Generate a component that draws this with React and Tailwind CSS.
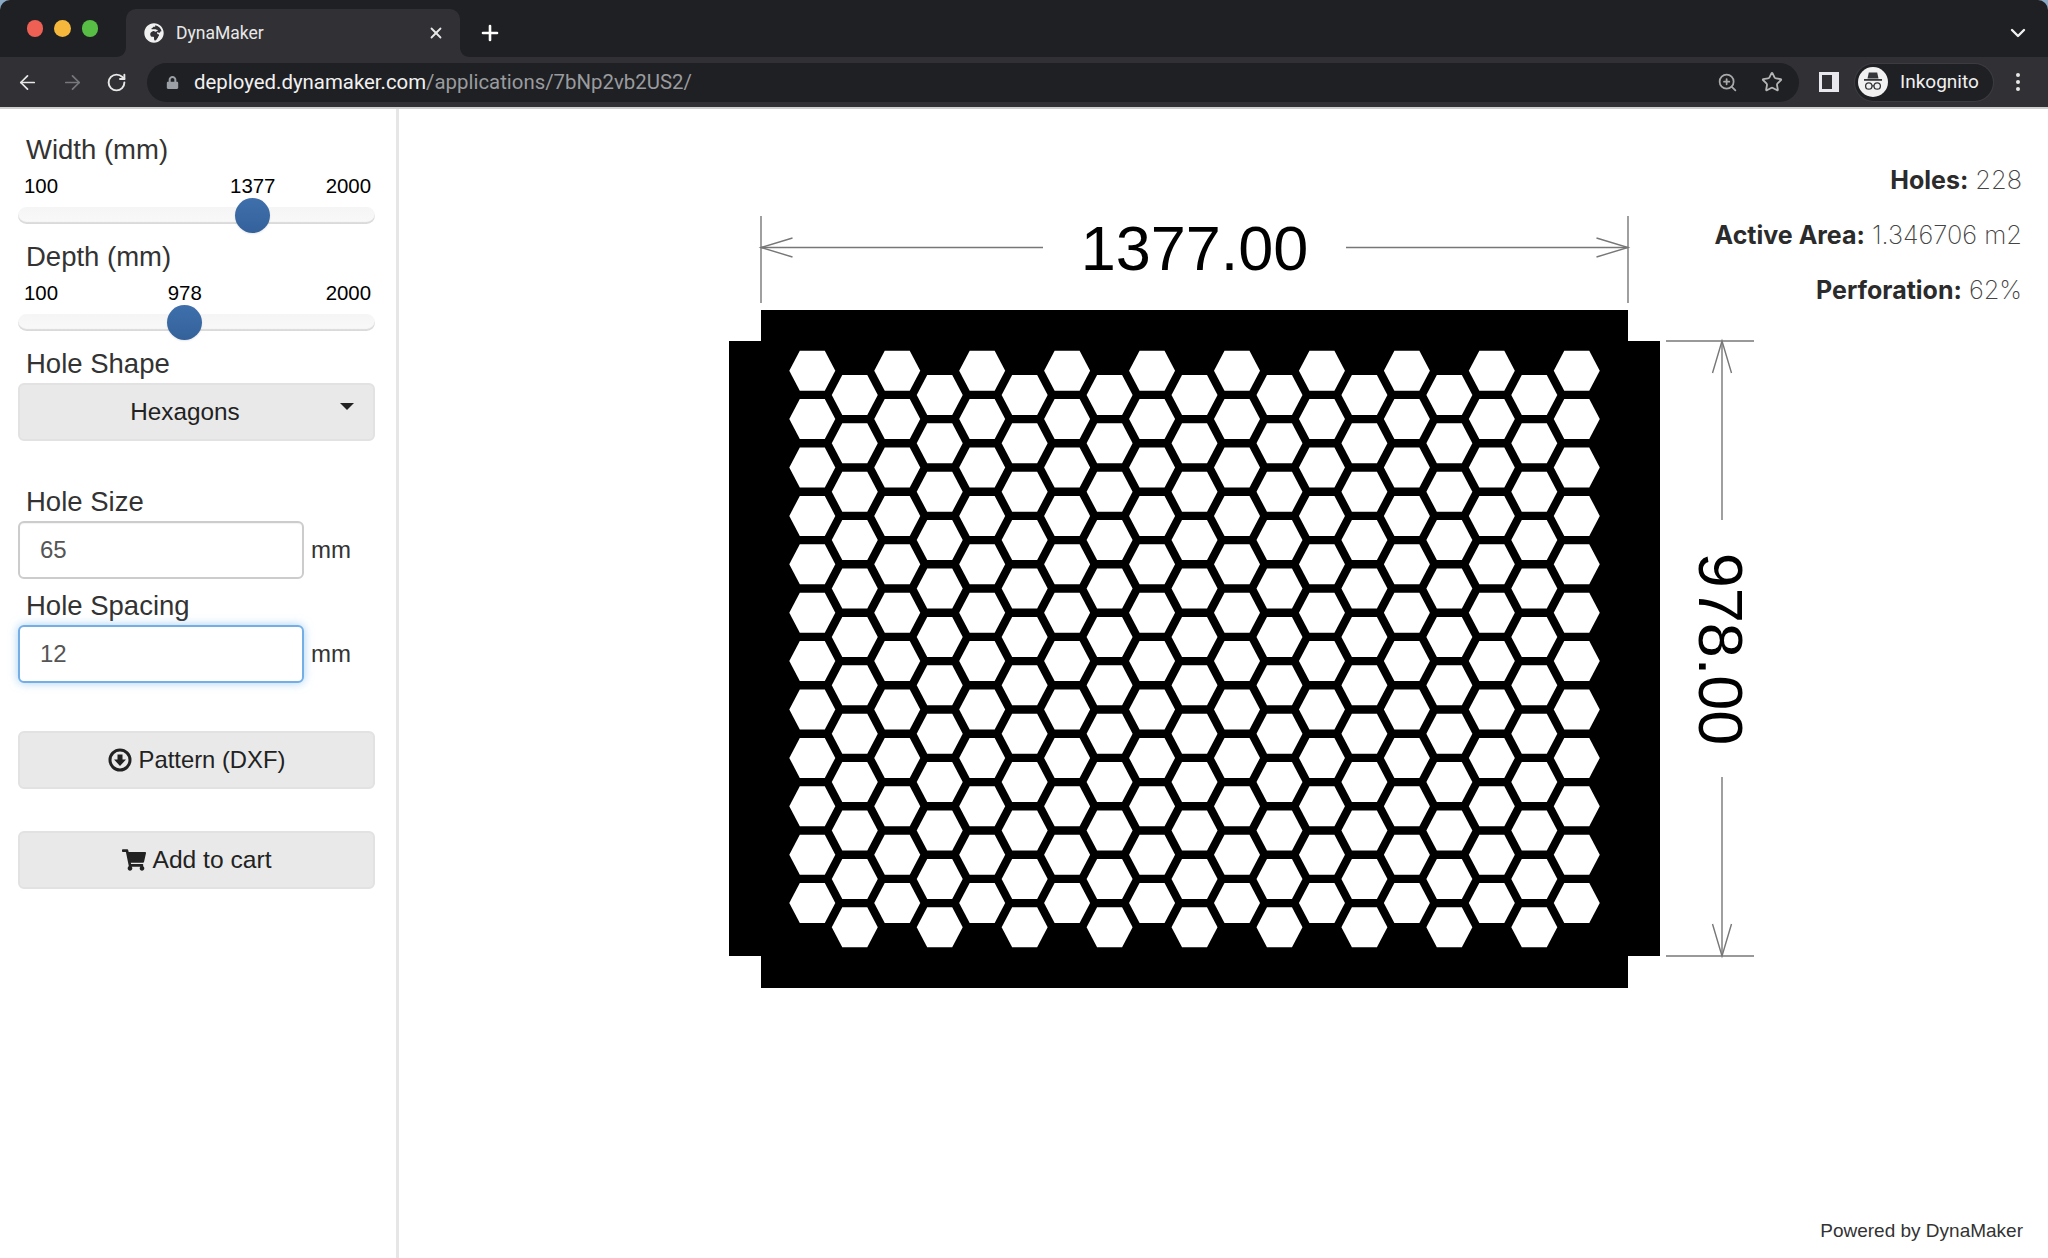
import { ArrowLeft, ArrowRight, ChevronDown, Plus, RotateCw, Star, X, ZoomIn } from "lucide-react";
import { FaGlobeAfrica, FaLock, FaShoppingCart } from "react-icons/fa";

const HEX_COLS = 19;
const HEX_ROWS = 12;

function hexPoints(cx, cy) {
  return [
    [cx - 23, cy],
    [cx - 12.5, cy - 20],
    [cx + 12.5, cy - 20],
    [cx + 23, cy],
    [cx + 12.5, cy + 20],
    [cx - 12.5, cy + 20],
  ]
    .map((p) => p.join(","))
    .join(" ");
}

function Drawing() {
  const hexes = [];
  for (let col = 0; col < HEX_COLS; col++) {
    for (let row = 0; row < HEX_ROWS; row++) {
      const cx = 92.3 + col * 42.47;
      const cy = 170.7 + row * 48.4 + (col % 2 ? 24.2 : 0);
      hexes.push(<polygon key={`${col}-${row}`} points={hexPoints(cx, cy)} fill="#fff" />);
    }
  }

  // svg origin sits at page x=720, y=200
  return (
    <svg width="1040" height="800" viewBox="0 0 1040 800" className="block ml-[321px] mt-[91px] [grid-area:1/1] justify-self-start self-start">
      <polygon points="41,110 908,110 908,141 940,141 940,756 908,756 908,788 41,788 41,756 9,756 9,141 41,141" fill="#000" />
      {hexes}

      <g stroke="#777" strokeWidth="1.4" fill="none">
        <path d="M41 16V103" />
        <path d="M908 16V103" />
        <path d="M41 47.5H323" />
        <path d="M626 47.5H908" />
        <path d="M72.5 38L41 47.5L72.5 57" />
        <path d="M876.5 38L908 47.5L876.5 57" />
        <path d="M946 141H1034" />
        <path d="M946 756H1034" />
        <path d="M1002 141V320" />
        <path d="M1002 577V756" />
        <path d="M992.5 173L1002 141L1011.5 173" />
        <path d="M992.5 724L1002 756L1011.5 724" />
      </g>

      <text x="474.5" y="69.5" textAnchor="middle" fontSize="63" fontFamily="'Liberation Sans', sans-serif" fill="#000">
        1377.00
      </text>
      <text x="0" y="0" transform="translate(979 449) rotate(90)" textAnchor="middle" fontSize="63" fontFamily="'Liberation Sans', sans-serif" fill="#000">
        978.00
      </text>
    </svg>
  );
}

function IncognitoIcon() {
  return (
    <svg width="30" height="30" viewBox="0 0 30 30" className="block">
      <circle cx="15" cy="15" r="15" fill="#f1f1f1" />
      <path d="M9.5 11.5L10.8 5.5H19.2L20.5 11.5Z" fill="#35363a" />
      <rect x="6" y="12" width="18" height="1.8" fill="#35363a" />
      <circle cx="10.8" cy="19" r="3.2" fill="none" stroke="#35363a" strokeWidth="1.3" />
      <circle cx="19.2" cy="19" r="3.2" fill="none" stroke="#35363a" strokeWidth="1.3" />
      <path d="M14 18.8H16" stroke="#35363a" strokeWidth="1.2" />
    </svg>
  );
}

function TabCorner({ flip }) {
  return (
    <svg width="10" height="10" viewBox="0 0 10 10" className={`block self-end ${flip ? "-scale-x-100" : ""}`}>
      <path d="M10 0V10H0C6 10 10 6 10 0Z" fill="#313135" />
    </svg>
  );
}

function BrowserChrome() {
  return (
    <div className="bg-[#8aa9c4]">
      <div className="rounded-t-[10px] bg-[#1f2023] font-['Roboto',sans-serif]">
        <div className="flex h-[57px] items-end">
          <div className="flex w-[116px] gap-[11px] self-start pl-[26.5px] pt-[20px]">
            <span className="h-[16.5px] w-[16.5px] shrink-0 rounded-full bg-[#ee5f54]" />
            <span className="h-[16.5px] w-[16.5px] shrink-0 rounded-full bg-[#f5b83d]" />
            <span className="h-[16.5px] w-[16.5px] shrink-0 rounded-full bg-[#57bd45]" />
          </div>
          <TabCorner />
          <div className="flex h-[48px] w-[334px] items-center rounded-t-[10px] bg-[#313135] pl-[18px] pr-[15px]">
            <FaGlobeAfrica className="text-[20px] text-[#f0f0f0]" />
            <span className="ml-[12px] flex-1 text-[17.5px] text-[#e8e8e8]">DynaMaker</span>
            <X size={18} strokeWidth={2.4} className="text-[#e8e8e8]" />
          </div>
          <TabCorner flip />
          <Plus size={24} strokeWidth={2.6} className="ml-[8px] mb-[12px] text-white" />
          <ChevronDown size={24} strokeWidth={2.4} className="ml-auto mr-[18px] mb-[12px] text-[#f0f0f0]" />
        </div>

        <div className="flex h-[52px] items-center border-b-2 border-[#cfcfcf] bg-[#313135]">
          <div className="flex w-[147px] items-center gap-[22px] pl-[16px]">
            <ArrowLeft size={23} strokeWidth={1.8} className="text-[#e8e8e8]" />
            <ArrowRight size={23} strokeWidth={1.8} className="text-[#77787c]" />
            <RotateCw size={21} strokeWidth={2.2} className="text-[#e8e8e8]" />
          </div>
          <div className="flex h-[39px] w-[1652px] items-center rounded-full bg-[#1f2023] pl-[19px] pr-[16px]">
            <FaLock className="text-[13px] text-[#9aa0a6]" />
            <span className="ml-[15px] text-[20.4px] text-[#f1f1f1]">
              deployed.dynamaker.com<span className="text-[#9a9b9f]">/applications/7bNp2vb2US2/</span>
            </span>
            <ZoomIn size={21} className="ml-auto text-[#a9a9a9]" />
            <Star size={22} className="ml-[23px] text-[#b5b5b5]" />
          </div>
          <span className="ml-[20px] h-[20px] w-[20px] border-[3px] border-r-[7px] border-[#e8e8ee]" />
          <div className="ml-[16px] flex h-[37px] w-[138px] items-center rounded-full bg-[#1f2023] pl-[3px] ring-1 ring-[#3c3c40]">
            <IncognitoIcon />
            <span className="ml-[12px] text-[19px] text-[#f1f1f1]">Inkognito</span>
          </div>
          <div className="ml-[23px] flex flex-col gap-[3px]">
            <span className="h-1 w-1 rounded-full bg-[#e8e8e8]" />
            <span className="h-1 w-1 rounded-full bg-[#e8e8e8]" />
            <span className="h-1 w-1 rounded-full bg-[#e8e8e8]" />
          </div>
        </div>
      </div>
    </div>
  );
}

function FieldLabel({ children, className = "" }) {
  return <div className={`h-[34px] pl-2 text-[27.5px] leading-[34px] text-[#333] ${className}`}>{children}</div>;
}

function Slider({ label, value, className = "" }) {
  const center = 17 + 324 * ((value - 100) / 1900);
  return (
    <div className={className}>
      <FieldLabel>{label}</FieldLabel>
      <div className="relative mt-[6px] flex h-[26px] items-center justify-between pl-[6px] pr-[4px] text-[20.4px] leading-[26px] text-black">
        <span>100</span>
        <span className="absolute -translate-x-1/2" style={{ left: center }}>
          {value}
        </span>
        <span>2000</span>
      </div>
      <div className="relative mt-[8px] h-[17px] rounded-full bg-gradient-to-b from-[#f5f5f5] to-[#f9f9f9] shadow-[inset_0_-2px_1px_rgba(0,0,0,0.12)]">
        <span
          className="absolute top-[-9px] h-[35px] w-[35px] rounded-full bg-gradient-to-b from-[#3f70ac] to-[#34619a] shadow-[0_1px_2px_rgba(0,0,0,0.1)]"
          style={{ left: center - 17.5 }}
        />
      </div>
    </div>
  );
}

function NumberField({ label, value, focused, className = "" }) {
  return (
    <div className={className}>
      <FieldLabel>{label}</FieldLabel>
      <div className="mt-[2px] flex items-center">
        <input
          readOnly
          value={value}
          className={`h-[58px] w-[286px] rounded-[6px] border-2 bg-white px-[20px] text-[24px] text-[#555] outline-none ${
            focused
              ? "border-[#73aee6] shadow-[0_0_10px_rgba(102,175,233,0.6)]"
              : "border-[#cccccc] shadow-[inset_0_1px_1px_rgba(0,0,0,0.05)]"
          }`}
        />
        <span className="ml-[7px] text-[24px] text-[#333]">mm</span>
      </div>
    </div>
  );
}

function ActionButton({ children, className = "" }) {
  return (
    <button className={`flex h-[58px] w-full items-center justify-center gap-[7px] rounded-[6px] border-2 border-[#e2e2e2] bg-[#e9e9e9] text-[#222] ${className}`}>
      {children}
    </button>
  );
}

function Sidebar() {
  return (
    <aside className="w-[399px] shrink-0 border-r-[3px] border-[#e6e6e6] pl-[18px] pr-[21px] pt-[24px]">
      <Slider label="Width (mm)" value={1377} />
      <Slider label="Depth (mm)" value={978} className="mt-[16px]" />
      <FieldLabel className="mt-[16px]">Hole Shape</FieldLabel>
      <button className="relative mt-[2px] h-[58px] w-full rounded-[6px] border-2 border-[#e2e2e2] bg-[#e9e9e9] pr-[23px] text-[24.3px] text-[#222]">
        Hexagons
        <span className="absolute right-[19px] top-[18px] border-x-[7px] border-t-[7px] border-x-transparent border-t-[#222]" />
      </button>
      <NumberField label="Hole Size" value="65" className="mt-[44px]" />
      <NumberField label="Hole Spacing" value="12" focused className="mt-[10px]" />
      <ActionButton className="mt-[48px]">
        <svg width="24" height="24" viewBox="0 0 24 24">
          <circle cx="12" cy="12" r="10" fill="none" stroke="#222" strokeWidth="3" />
          <path d="M9.5 6.5H14.5V11.5H18L12 18L6 11.5H9.5Z" fill="#222" />
        </svg>
        <span className="text-[23.8px]">Pattern (DXF)</span>
      </ActionButton>
      <ActionButton className="mt-[42px]">
        <FaShoppingCart className="text-[24px]" />
        <span className="text-[24.6px]">Add to cart</span>
      </ActionButton>
    </aside>
  );
}

function Stat({ name, value }) {
  return (
    <p className="h-[55px] leading-[30px]">
      <b className="font-bold text-[#2b2b2b]">{name}</b> <span className="text-[25.4px] font-extralight text-[#444]">{value}</span>
    </p>
  );
}

export default function App() {
  return (
    <div className="flex h-[1258px] w-[2048px] flex-col overflow-hidden bg-white font-['Liberation_Sans',sans-serif]">
      <BrowserChrome />
      <div className="flex min-h-0 flex-1">
        <Sidebar />
        <main className="grid flex-1 grid-cols-1 grid-rows-1">
          <Drawing />
          <div className="[grid-area:1/1] justify-self-end self-start pt-[56px] pr-[26px] text-right font-['Inter',sans-serif] text-[25px]">
            <Stat name="Holes:" value="228" />
            <Stat name="Active Area:" value="1.346706 m2" />
            <Stat name="Perforation:" value="62%" />
          </div>
          <div className="[grid-area:1/1] justify-self-end self-end pb-[13px] pr-[25px] text-[19px] text-[#333]">
            Powered by DynaMaker
          </div>
        </main>
      </div>
    </div>
  );
}
